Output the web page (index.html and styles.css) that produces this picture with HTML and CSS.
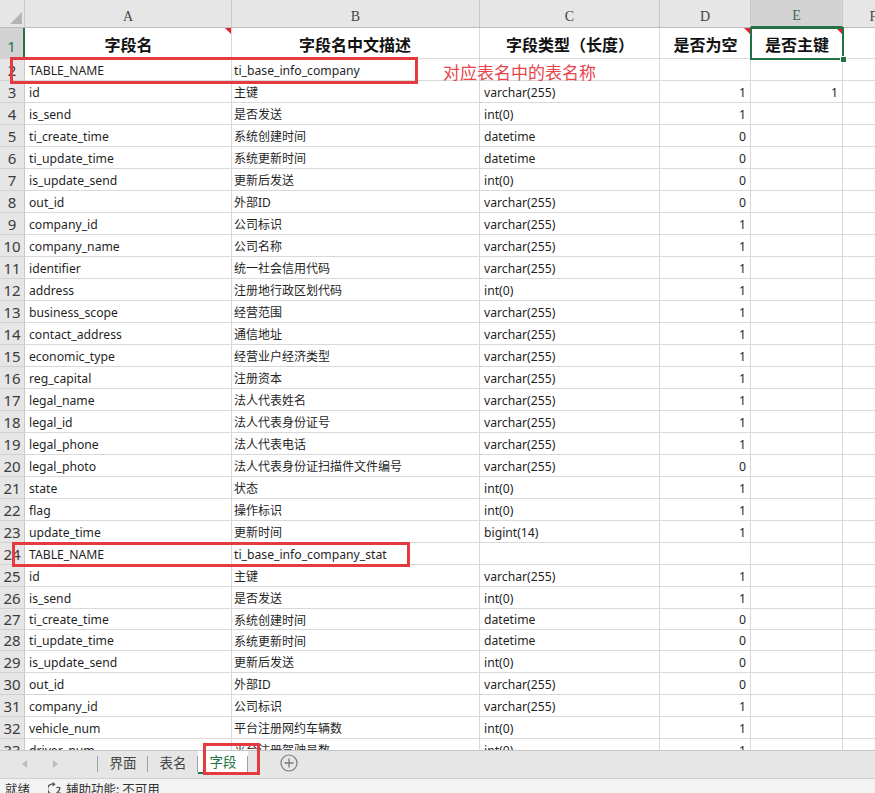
FILE: index.html
```html
<!DOCTYPE html>
<html lang="zh-CN">
<head>
<meta charset="utf-8">
<title>字段</title>
<link rel="stylesheet" href="styles.css">
</head>
<body>
<div class="app">
  <div class="sheet">
    <div class="row colhead">
      <div class="corner"><span class="tri"></span></div>
      <div class="ch">A</div><div class="ch">B</div><div class="ch">C</div><div class="ch">D</div><div class="ch sel">E</div><div class="ch">F</div>
    </div>
    <div class="row r1">
      <div class="rh sel">1</div>
      <div class="c hd cm">字段名</div><div class="c hd">字段名中文描述</div><div class="c hd">字段类型（长度）</div><div class="c hd cm">是否为空</div><div class="c hd cm">是否主键</div><div class="c"></div>
    </div>
    <div class="row"><div class="rh">2</div><div class="c">TABLE_NAME</div><div class="c">ti_base_info_company</div><div class="c"></div><div class="c n"></div><div class="c n"></div><div class="c"></div></div>
    <div class="row"><div class="rh">3</div><div class="c">id</div><div class="c cn">主键</div><div class="c">varchar(255)</div><div class="c n">1</div><div class="c n">1</div><div class="c"></div></div>
    <div class="row"><div class="rh">4</div><div class="c">is_send</div><div class="c cn">是否发送</div><div class="c">int(0)</div><div class="c n">1</div><div class="c n"></div><div class="c"></div></div>
    <div class="row"><div class="rh">5</div><div class="c">ti_create_time</div><div class="c cn">系统创建时间</div><div class="c">datetime</div><div class="c n">0</div><div class="c n"></div><div class="c"></div></div>
    <div class="row"><div class="rh">6</div><div class="c">ti_update_time</div><div class="c cn">系统更新时间</div><div class="c">datetime</div><div class="c n">0</div><div class="c n"></div><div class="c"></div></div>
    <div class="row"><div class="rh">7</div><div class="c">is_update_send</div><div class="c cn">更新后发送</div><div class="c">int(0)</div><div class="c n">0</div><div class="c n"></div><div class="c"></div></div>
    <div class="row"><div class="rh">8</div><div class="c">out_id</div><div class="c cn">外部ID</div><div class="c">varchar(255)</div><div class="c n">0</div><div class="c n"></div><div class="c"></div></div>
    <div class="row"><div class="rh">9</div><div class="c">company_id</div><div class="c cn">公司标识</div><div class="c">varchar(255)</div><div class="c n">1</div><div class="c n"></div><div class="c"></div></div>
    <div class="row"><div class="rh">10</div><div class="c">company_name</div><div class="c cn">公司名称</div><div class="c">varchar(255)</div><div class="c n">1</div><div class="c n"></div><div class="c"></div></div>
    <div class="row"><div class="rh">11</div><div class="c">identifier</div><div class="c cn">统一社会信用代码</div><div class="c">varchar(255)</div><div class="c n">1</div><div class="c n"></div><div class="c"></div></div>
    <div class="row"><div class="rh">12</div><div class="c">address</div><div class="c cn">注册地行政区划代码</div><div class="c">int(0)</div><div class="c n">1</div><div class="c n"></div><div class="c"></div></div>
    <div class="row"><div class="rh">13</div><div class="c">business_scope</div><div class="c cn">经营范围</div><div class="c">varchar(255)</div><div class="c n">1</div><div class="c n"></div><div class="c"></div></div>
    <div class="row"><div class="rh">14</div><div class="c">contact_address</div><div class="c cn">通信地址</div><div class="c">varchar(255)</div><div class="c n">1</div><div class="c n"></div><div class="c"></div></div>
    <div class="row"><div class="rh">15</div><div class="c">economic_type</div><div class="c cn">经营业户经济类型</div><div class="c">varchar(255)</div><div class="c n">1</div><div class="c n"></div><div class="c"></div></div>
    <div class="row"><div class="rh">16</div><div class="c">reg_capital</div><div class="c cn">注册资本</div><div class="c">varchar(255)</div><div class="c n">1</div><div class="c n"></div><div class="c"></div></div>
    <div class="row"><div class="rh">17</div><div class="c">legal_name</div><div class="c cn">法人代表姓名</div><div class="c">varchar(255)</div><div class="c n">1</div><div class="c n"></div><div class="c"></div></div>
    <div class="row"><div class="rh">18</div><div class="c">legal_id</div><div class="c cn">法人代表身份证号</div><div class="c">varchar(255)</div><div class="c n">1</div><div class="c n"></div><div class="c"></div></div>
    <div class="row"><div class="rh">19</div><div class="c">legal_phone</div><div class="c cn">法人代表电话</div><div class="c">varchar(255)</div><div class="c n">1</div><div class="c n"></div><div class="c"></div></div>
    <div class="row"><div class="rh">20</div><div class="c">legal_photo</div><div class="c cn">法人代表身份证扫描件文件编号</div><div class="c">varchar(255)</div><div class="c n">0</div><div class="c n"></div><div class="c"></div></div>
    <div class="row"><div class="rh">21</div><div class="c">state</div><div class="c cn">状态</div><div class="c">int(0)</div><div class="c n">1</div><div class="c n"></div><div class="c"></div></div>
    <div class="row"><div class="rh">22</div><div class="c">flag</div><div class="c cn">操作标识</div><div class="c">int(0)</div><div class="c n">1</div><div class="c n"></div><div class="c"></div></div>
    <div class="row"><div class="rh">23</div><div class="c">update_time</div><div class="c cn">更新时间</div><div class="c">bigint(14)</div><div class="c n">1</div><div class="c n"></div><div class="c"></div></div>
    <div class="row"><div class="rh">24</div><div class="c">TABLE_NAME</div><div class="c">ti_base_info_company_stat</div><div class="c"></div><div class="c n"></div><div class="c n"></div><div class="c"></div></div>
    <div class="row"><div class="rh">25</div><div class="c">id</div><div class="c cn">主键</div><div class="c">varchar(255)</div><div class="c n">1</div><div class="c n"></div><div class="c"></div></div>
    <div class="row"><div class="rh">26</div><div class="c">is_send</div><div class="c cn">是否发送</div><div class="c">int(0)</div><div class="c n">1</div><div class="c n"></div><div class="c"></div></div>
    <div class="row short"><div class="rh">27</div><div class="c">ti_create_time</div><div class="c cn">系统创建时间</div><div class="c">datetime</div><div class="c n">0</div><div class="c n"></div><div class="c"></div></div>
    <div class="row short"><div class="rh">28</div><div class="c">ti_update_time</div><div class="c cn">系统更新时间</div><div class="c">datetime</div><div class="c n">0</div><div class="c n"></div><div class="c"></div></div>
    <div class="row"><div class="rh">29</div><div class="c">is_update_send</div><div class="c cn">更新后发送</div><div class="c">int(0)</div><div class="c n">0</div><div class="c n"></div><div class="c"></div></div>
    <div class="row"><div class="rh">30</div><div class="c">out_id</div><div class="c cn">外部ID</div><div class="c">varchar(255)</div><div class="c n">0</div><div class="c n"></div><div class="c"></div></div>
    <div class="row"><div class="rh">31</div><div class="c">company_id</div><div class="c cn">公司标识</div><div class="c">varchar(255)</div><div class="c n">1</div><div class="c n"></div><div class="c"></div></div>
    <div class="row"><div class="rh">32</div><div class="c">vehicle_num</div><div class="c cn">平台注册网约车辆数</div><div class="c">int(0)</div><div class="c n">1</div><div class="c n"></div><div class="c"></div></div>
    <div class="row"><div class="rh">33</div><div class="c">driver_num</div><div class="c cn">平台注册驾驶员数</div><div class="c">int(0)</div><div class="c n">1</div><div class="c n"></div><div class="c"></div></div>

    <div class="selbox"><span class="handle"></span></div>
    <div class="mark m1"></div>
    <div class="mark m2"></div>
    <div class="note">对应表名中的表名称</div>
  </div>

  <div class="tabs">
    <div class="nav">
      <svg width="70" height="12" viewBox="0 0 70 12"><path d="M27 2 L22 6 L27 10 Z" fill="#bdbdbd"/><path d="M53 2 L58 6 L53 10 Z" fill="#bdbdbd"/></svg>
    </div>
    <div class="tab">界面</div>
    <div class="tab">表名</div>
    <div class="tab active">字段</div>
    <div class="add">
      <svg width="18" height="18" viewBox="0 0 18 18"><circle cx="9" cy="9" r="8" fill="none" stroke="#7a7a7a" stroke-width="1.2"/><path d="M9 4.5 V13.5 M4.5 9 H13.5" stroke="#7a7a7a" stroke-width="1.3"/></svg>
    </div>
    <div class="mark m3"></div>
  </div>

  <div class="status">
    <span class="st">就绪</span>
    <span class="acc">
      <svg width="16" height="14" viewBox="0 0 16 14"><path d="M6 2.2 A5 5 0 1 0 6 11.8" fill="none" stroke="#444" stroke-width="1.1"/><path d="M4.5 0.8 L6.6 2.3 L4.6 3.8" fill="none" stroke="#444" stroke-width="1.1"/><path d="M8.5 6 Q10.5 4.5 12 6 Q12 8 9 11 H13" fill="none" stroke="#444" stroke-width="1.2"/></svg>
      辅助功能: 不可用
    </span>
  </div>
</div>
</body>
</html>
```
FILE: styles.css
```css
* { box-sizing: border-box; }
html, body { margin: 0; padding: 0; background: #fff; }
body {
  font-family: "Noto Sans", "Noto Sans CJK SC", sans-serif;
  color: #222;
}
.app {
  width: 875px;
  height: 793px;
  overflow: hidden;
  display: flex;
  flex-direction: column;
}
.sheet {
  position: relative;
  height: 750px;
  flex: none;
  overflow: hidden;
}
.row {
  display: grid;
  grid-template-columns: 25px 207px 248px 180px 91px 92px 62px;
  height: 22px;
}
.row.short { height: 21px; }
.colhead {
  height: 28px;
  background: #e6e6e6;
  border-bottom: 1px solid #bdbdbd;
}
.corner {
  position: relative;
  border-right: 1px solid #c8c8c8;
}
.tri {
  position: absolute;
  right: 2px;
  bottom: 3px;
  width: 0;
  height: 0;
  border-left: 12px solid transparent;
  border-bottom: 12px solid #b5b5b5;
}
.ch {
  display: flex;
  align-items: flex-end;
  justify-content: center;
  padding-bottom: 2px;
  font-family: "Liberation Serif", "DejaVu Serif", serif;
  font-size: 14px;
  line-height: 16px;
  color: #444;
  border-right: 1px solid #c8c8c8;
}
.ch.sel {
  background: #d3d3d3;
  color: #3d6b52;
  border-bottom: 2px solid #217346;
  margin-bottom: -1px;
}
.rh {
  display: flex;
  align-items: flex-end;
  justify-content: center;
  background: #e6e6e6;
  border-right: 1px solid #c8c8c8;
  border-bottom: 1px solid #d0d0d0;
  font-size: 15px;
  line-height: 20px;
  color: #3c3c3c;
}
.rh.sel {
  background: #d3d3d3;
  border-right: 2px solid #217346;
  color: #217346;
  padding-bottom: 2px;
}
.c {
  position: relative;
  display: flex;
  align-items: center;
  padding: 1px 3px 0 4px;
  border-right: 1px solid #d9d9d9;
  border-bottom: 1px solid #d9d9d9;
  font-size: 12.2px;
  white-space: nowrap;
  overflow: hidden;
  color: #1f1f1f;
}
.row > .c:nth-child(3) { padding-left: 2px; }
.c.cn { font-size: 12px; }
.c.n { justify-content: flex-end; padding-right: 4px; }
.r1 { height: 31px; }
.c.hd {
  justify-content: center;
  font-family: "Noto Sans CJK SC", sans-serif;
  font-weight: 700;
  font-size: 16px;
  color: #111;
  padding-top: 2px;
}
.c.cm::after {
  content: "";
  position: absolute;
  top: 0;
  right: 0;
  border-left: 6px solid transparent;
  border-top: 6px solid #e5202a;
}
.selbox {
  position: absolute;
  left: 750px;
  top: 27px;
  width: 94px;
  height: 33px;
  border: 2px solid #217346;
}
.handle {
  position: absolute;
  right: -5px;
  bottom: -5px;
  width: 7px;
  height: 7px;
  background: #217346;
  border: 1px solid #fff;
}
.mark {
  position: absolute;
  border: 3px solid #e53a40;
  pointer-events: none;
}
.m1 { left: 10px; top: 57px; width: 408px; height: 27px; }
.m2 { left: 12px; top: 542px; width: 398px; height: 25px; }
.note {
  position: absolute;
  left: 443px;
  top: 61px;
  font-family: "Noto Sans CJK SC", sans-serif;
  font-size: 17px;
  line-height: 22px;
  color: #e8454b;
}
.tabs {
  position: relative;
  height: 29px;
  flex: none;
  display: flex;
  align-items: stretch;
  background: #e6e6e6;
  border-top: 1px solid #c6c6c6;
  border-bottom: 1px solid #d0d0d0;
  font-family: "Noto Sans CJK SC", sans-serif;
}
.nav {
  width: 98px;
  display: flex;
  align-items: center;
  border-right: 1px solid #9e9e9e;
  margin: 5px 0 6px;
}
.tab {
  width: 50px;
  display: flex;
  align-items: center;
  justify-content: center;
  padding-bottom: 5px;
  font-size: 13.5px;
  color: #444;
  position: relative;
}
.tab::after {
  content: "";
  position: absolute;
  right: 0;
  top: 5px;
  bottom: 6px;
  border-right: 1px solid #9e9e9e;
}
.tab.active {
  background: #fff;
  color: #217346;
  border-bottom: 2px solid #217346;
  margin-bottom: 4px;
  padding-bottom: 1px;
}
.tab.active::after { top: 5px; bottom: -2px; }
.add {
  display: flex;
  align-items: center;
  padding-left: 32px;
  padding-bottom: 4px;
}
.m3 { left: 203px; top: -8px; width: 57px; height: 32px; }
.status {
  height: 20px;
  flex: none;
  background: #f3f3f3;
  display: flex;
  align-items: flex-start;
  padding: 3px 0 0 5px;
  font-family: "Noto Sans CJK SC", sans-serif;
  font-size: 12.5px;
  line-height: 14px;
  color: #333;
}
.st { width: 43px; }
.acc { display: flex; align-items: center; gap: 2px; }
```
